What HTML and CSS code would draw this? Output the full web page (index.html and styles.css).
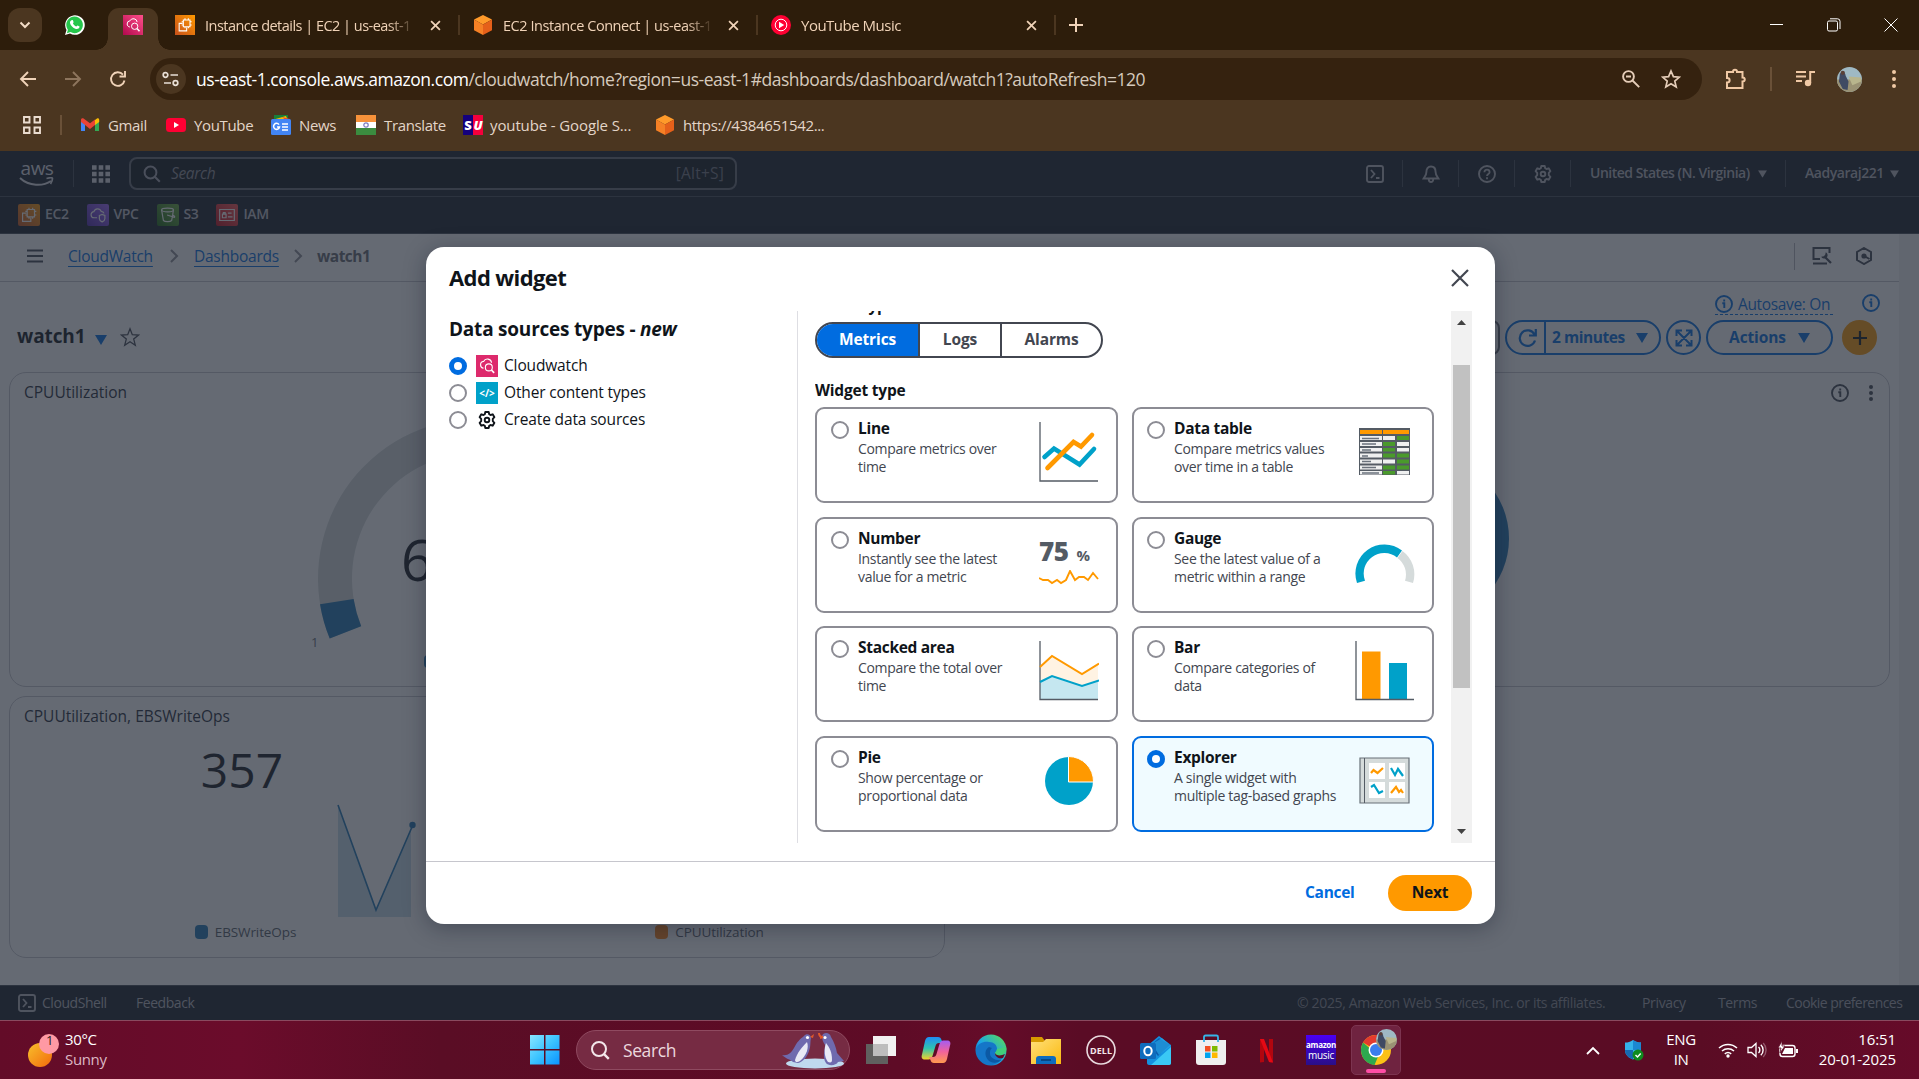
FILE: index.html
```html
<!DOCTYPE html>
<html lang="en">
<head>
<meta charset="utf-8">
<title>watch1 | CloudWatch | us-east-1</title>
<link rel="stylesheet" href="styles.css">
</head>
<body>
<svg class="sprite" aria-hidden="true">
  <defs>
    <linearGradient id="gWin" x1="0" y1="0" x2="1" y2="1"><stop offset="0" stop-color="#8ae6ff"/><stop offset=".5" stop-color="#3cc4ff"/><stop offset="1" stop-color="#0a92ff"/></linearGradient>
    <linearGradient id="gSun" x1="0" y1="0" x2="1" y2="1"><stop offset="0" stop-color="#f8c02c"/><stop offset="1" stop-color="#f26a0c"/></linearGradient>
    <linearGradient id="gEdge" x1="0" y1="1" x2="1" y2="0"><stop offset="0" stop-color="#0c59a4"/><stop offset=".45" stop-color="#1aa5e8"/><stop offset="1" stop-color="#5fe04a"/></linearGradient>
    <linearGradient id="gCopA" x1="0" y1="0" x2="0" y2="1"><stop offset="0" stop-color="#1f8df5"/><stop offset=".5" stop-color="#2fc3b0"/><stop offset="1" stop-color="#f4d22b"/></linearGradient>
    <linearGradient id="gCopB" x1="0" y1="0" x2="0" y2="1"><stop offset="0" stop-color="#a45cf2"/><stop offset=".5" stop-color="#f0629c"/><stop offset="1" stop-color="#ff9a4d"/></linearGradient>
    <linearGradient id="gFolder" x1="0" y1="0" x2="1" y2="1"><stop offset="0" stop-color="#ffe07a"/><stop offset="1" stop-color="#fbb90f"/></linearGradient>
  </defs>
  <symbol id="cw" viewBox="0 0 24 24"><path d="M17 8.500A4.600 4.600 0 0 0 8.300 7 3.700 3.700 0 0 0 5 10.800c0 2 1.300 3.300 3.200 3.600" fill="none" stroke="#fff" stroke-width="1.200"/><circle cx="14" cy="13.500" r="3.800" fill="none" stroke="#fff" stroke-width="1.200"/><path d="M16.800 16.300l3 3.200" stroke="#fff" stroke-width="1.800"/></symbol>
  <symbol id="ec2" viewBox="0 0 24 24"><path d="M10 6h8v8h-8zM12 4v2m4-2v2m-4 8v2m4-2v2M8 8h2m-2 4h2m8-4h2m-2 4h2M9 10H5v9h9v-4" fill="none" stroke="#fff" stroke-width="1.300"/></symbol>
  <symbol id="hexa" viewBox="0 0 20 20"><path d="M10 0l9 4.500L10 9.500 1 4.500z" fill="#ff9a2a"/><path d="M1 4.500l9 5V20l-9-4.700z" fill="#f58025"/><path d="M19 4.500l-9 5V20l9-4.700z" fill="#e5601a"/></symbol>
  <symbol id="x" viewBox="0 0 10 10"><path d="M1 1l8 8M9 1L1 9" stroke="currentColor" stroke-width="1.600" fill="none"/></symbol>
  <symbol id="info" viewBox="0 0 18 18"><circle cx="9" cy="9" r="8" fill="none" stroke="currentColor" stroke-width="1.900"/><path d="M7.300 8.200h2V13M9.200 4.600v1.800" stroke="currentColor" stroke-width="1.900" fill="none"/></symbol>
  <symbol id="caret" viewBox="0 0 12 10"><path d="M0 0h12L6 10z" fill="currentColor"/></symbol>
  <symbol id="gear" viewBox="0 0 18 18"><path d="M7.300 1h3.400l.5 2.200 1.300.8 2.200-.7 1.700 2.900-1.600 1.600v2.400l1.600 1.600-1.700 2.900-2.200-.7-1.300.8-.5 2.200H7.300l-.5-2.200-1.300-.8-2.200.7-1.700-2.900 1.600-1.600V7.800L1.600 6.200l1.700-2.900 2.200.7 1.300-.8z" fill="none" stroke="currentColor" stroke-width="1.900" stroke-linejoin="round"/><circle cx="9" cy="9" r="2.300" fill="none" stroke="currentColor" stroke-width="1.900"/></symbol>
  <symbol id="shell" viewBox="0 0 18 18"><rect x="1" y="1" width="16" height="16" rx="2" fill="none" stroke="currentColor" stroke-width="1.900"/><path d="M5 5l3.500 4L5 13M10 13h3.500" fill="none" stroke="currentColor" stroke-width="1.800"/></symbol>
  <symbol id="chev" viewBox="0 0 10 14"><path d="M2 1l6 6-6 6" fill="none" stroke="currentColor" stroke-width="2"/></symbol>
  <symbol id="face" viewBox="0 0 26 26"><circle cx="13" cy="13" r="13" fill="#9fb9c4"/><path d="M0 13h26a13 13 0 0 1-26 0z" fill="#9a9274"/><path d="M12 10l13 1v4l-9 4z" fill="#b8b58d"/><path d="M3 7c3-4 6-1 6 2l3 6-1 9-5-1-4-8z" fill="#3f4a63"/><circle cx="6" cy="6" r="2.200" fill="#5a4038"/></symbol>
</svg>

<header class="tabs">
  <div class="tab-search"><svg width="12" height="8"><path d="M1.500 1.500L6 6l4.500-4.500" fill="none" stroke="#f3dcc6" stroke-width="2"/></svg></div>
  <svg class="wa" width="20" height="20" viewBox="0 0 20 20"><path d="M0 20l1.500-5A9.800 9.800 0 1 1 5 18.500z" fill="#fff"/><path d="M1.900 18.200l1-3.400A8.300 8.300 0 1 1 5.500 17.100z" fill="#25c64b"/><path d="M6.500 5.300c1.200-.5 1.500 0 2 1.600.2.700-.7 1.100-.5 1.600.8 1.500 1.800 2.300 3.200 2.900.5.100.9-1 1.400-.8 1.500.7 2.100.8 1.900 1.500-.6 2-2.500 2.200-4.200 1.600C7.500 12.600 5.500 10.500 5 8c-.1-1.200.5-2.200 1.500-2.700z" fill="#fff"/></svg>
  <div class="tab-active"><span class="fav pink"><svg width="20" height="20"><use href="#cw"/></svg></span></div>
  <div class="tab t1"><span class="fav orange"><svg width="20" height="20"><use href="#ec2"/></svg></span><span class="tab-title">Instance details | EC2 | us-east-1</span><svg class="tx" width="11" height="11"><use href="#x"/></svg></div>
  <i class="tab-sep"></i>
  <div class="tab t2"><svg width="20" height="20"><use href="#hexa"/></svg><span class="tab-title">EC2 Instance Connect | us-east-1</span><svg class="tx" width="11" height="11"><use href="#x"/></svg></div>
  <i class="tab-sep"></i>
  <div class="tab t3"><svg width="20" height="20"><circle cx="10" cy="10" r="10" fill="#ff0033"/><circle cx="10" cy="10" r="5.800" fill="none" stroke="#fff"/><path d="M8 6.800l5.200 3.200L8 13.200z" fill="#fff"/></svg><span class="tab-title">YouTube Music</span><svg class="tx" width="11" height="11"><use href="#x"/></svg></div>
  <i class="tab-sep"></i>
  <svg class="newtab" width="14" height="14"><path d="M7 0v14M0 7h14" stroke="#f0d3b8" stroke-width="2"/></svg>
  <div class="win">
    <svg width="14" height="14"><path d="M0 6.500h13" stroke="#fff"/></svg>
    <svg width="14" height="14"><rect x=".5" y="3" width="10" height="10" rx="1.500" fill="none" stroke="#fff"/><path d="M3 .8h7.500a2.500 2.500 0 0 1 2.500 2.500V11" fill="none" stroke="#fff"/></svg>
    <svg width="14" height="14"><path d="M.5.5l13 13M13.500.5l-13 13" stroke="#fff"/></svg>
  </div>
</header>

<section class="chrome">
  <div class="bar">
    <svg class="nav-i" width="18" height="18"><path d="M17 9H2M9 2L2 9l7 7" fill="none" stroke="#f0d3b8" stroke-width="1.900"/></svg>
    <svg class="nav-i off" width="18" height="18"><path d="M1 9h15M9 2l7 7-7 7" fill="none" stroke="#f0d3b8" stroke-width="1.900"/></svg>
    <svg class="nav-i" width="18" height="18"><path d="M15.500 10.500A6.800 6.800 0 1 1 14 4.600M16 1v5.500h-5.500" fill="none" stroke="#f0d3b8" stroke-width="1.900"/></svg>
    <div class="omni">
      <span class="site"><svg width="18" height="16"><circle cx="3.500" cy="4" r="2.300" fill="none" stroke="#e9dfd6" stroke-width="1.700"/><path d="M8.500 4H16M2 12h7" stroke="#e9dfd6" stroke-width="1.700"/><circle cx="13.500" cy="12" r="2.300" fill="none" stroke="#e9dfd6" stroke-width="1.700"/></svg></span>
      <span class="url"><b>us-east-1.console.aws.amazon.com</b>/cloudwatch/home?region=us-east-1#dashboards/dashboard/watch1?autoRefresh=120</span>
      <svg width="18" height="18"><circle cx="6.500" cy="6.500" r="5.400" fill="none" stroke="#e5cdb8" stroke-width="1.900"/><path d="M10.500 10.500l6.700 6.700M4 6.500h5" stroke="#e5cdb8" stroke-width="1.900"/></svg>
      <svg class="star" width="20" height="20" viewBox="0 0 20 20"><path d="M10 2l2.400 5.600 6 .5-4.600 4 1.400 5.900L10 14.800 4.800 18l1.400-5.900-4.600-4 6-.5z" fill="none" stroke="#e5cdb8" stroke-width="1.700"/></svg>
    </div>
    <svg class="ext" width="22" height="22" viewBox="0 0 22 22"><path d="M3 4h5c0-3 4-3 4 0h5.500v5.500c3 0 3 4 0 4V20H2v-5.500c3.500 0 3.500-4.500 0-4.500V4z" fill="none" stroke="#f0c9a5" stroke-width="2"/></svg>
    <i class="bar-sep"></i>
    <svg class="mus" width="20" height="18"><path d="M1 2h10M1 6.500h10M1 11h6" stroke="#f0c9a5" stroke-width="2"/><circle cx="13" cy="13" r="3.200" fill="#f0c9a5"/><path d="M15.200 13V2H20" stroke="#f0c9a5" stroke-width="2" fill="none"/></svg>
    <svg class="ava" width="25" height="25"><use href="#face"/></svg>
    <svg class="kebab" width="4" height="18"><circle cx="2" cy="2" r="2" fill="#f0c9a5"/><circle cx="2" cy="9" r="2" fill="#f0c9a5"/><circle cx="2" cy="16" r="2" fill="#f0c9a5"/></svg>
  </div>
  <div class="marks">
    <svg class="apps" width="18" height="18"><path d="M1 1h5.500v5.500H1zM11.500 1H17v5.500h-5.500zM1 11.500h5.500V17H1zM11.500 11.500H17V17h-5.500z" fill="none" stroke="#eadccf" stroke-width="1.900"/></svg>
    <i></i>
    <a class="m1"><svg width="20" height="20"><path d="M1 4v12h4V9z" fill="#4285f4"/><path d="M19 4v12h-4V9z" fill="#34a853"/><path d="M15 5l2-1.500c1-.6 2.200 0 2.200 1.300V7L15 10z" fill="#fbbc04"/><path d="M1 5c0-1.700 1.500-2.300 2.600-1.400L10 8.300l5-3.800V10l-5 4-5-4-4-3z" fill="#ea4335"/></svg><span>Gmail</span></a>
    <a class="m2"><svg width="20" height="20"><rect y="3" width="20" height="14" rx="3.500" fill="#ff0033"/><path d="M8 7l5 3-5 3z" fill="#fff"/></svg><span>YouTube</span></a>
    <a class="m3"><svg width="20" height="20"><path d="M3 0h14v6H3z" fill="#188038"/><path d="M1 5l14-4 3 7z" fill="#fbbc04"/><path d="M11 2l8 2-1 4z" fill="#ea4335"/><rect y="4" width="20" height="16" rx="1.500" fill="#4285f4"/><path d="M8 9.600A3 3 0 1 0 8.500 12H6M11 9h6M11 12h6M11 15h6" stroke="#fff" stroke-width="1.500" fill="none"/></svg><span>News</span></a>
    <a class="m4"><svg width="20" height="20"><path d="M0 0h20v7H0z" fill="#f7923a"/><path d="M0 7h20v6H0z" fill="#fff"/><path d="M0 13h20v7H0z" fill="#3b8c3f"/><circle cx="10" cy="10" r="2.200" fill="none" stroke="#7b7bc0" stroke-width="1.200"/></svg><span>Translate</span></a>
    <a class="m5"><span class="su"><b>S</b><em>U</em></span><span>youtube - Google S...</span></a>
    <a class="m6"><svg width="20" height="20"><use href="#hexa"/></svg><span>https://4384651542...</span></a>
  </div>
</section>

<div class="page">
  <nav class="aws">
    <div class="logo"><span>aws</span><svg width="36" height="11"><path d="M1 1c9 8.500 23 8.500 31 3" fill="none" stroke="currentColor" stroke-width="2"/><path d="M27.500 1.500c4-1 6-1 6 0s-.7 3.500-2 5.500" fill="none" stroke="currentColor" stroke-width="1.700"/></svg></div>
    <i class="sep"></i>
    <svg class="grid9" width="18" height="18"><path d="M0 2.500h18M0 9h18M0 15.500h18" stroke="currentColor" stroke-width="4.600" stroke-dasharray="4.600 2.100"/></svg>
    <div class="search"><svg width="18" height="18"><circle cx="7.500" cy="7.500" r="5.900" fill="none" stroke="currentColor" stroke-width="2"/><path d="M11.800 11.800l5 5" stroke="currentColor" stroke-width="2"/></svg><em>Search</em><span>[Alt+S]</span></div>
    <div class="aws-right">
      <svg width="18" height="18"><use href="#shell"/></svg><i class="sep"></i>
      <svg width="18" height="18"><path d="M9 1.500c-3.200 0-4.600 2.500-4.600 5.500 0 3-1.400 4-2.800 6.500h14.800C15 11 13.600 10 13.600 7c0-3-1.400-5.500-4.600-5.500zM6.800 14.500a2.200 2.500 0 0 0 4.400 0" fill="none" stroke="currentColor" stroke-width="1.900"/></svg><i class="sep"></i>
      <svg width="18" height="18"><circle cx="9" cy="9" r="8" fill="none" stroke="currentColor" stroke-width="1.900"/><path d="M6.400 7.200c0-3.400 5.200-3.400 5.200 0 0 1.800-2.600 1.800-2.600 3.800M9 12.300v2" fill="none" stroke="currentColor" stroke-width="1.800"/></svg><i class="sep"></i>
      <svg width="18" height="18"><use href="#gear"/></svg><i class="sep"></i>
      <span class="region">United States (N. Virginia)</span><svg class="c1" width="9" height="8" viewBox="0 0 12 10"><use href="#caret"/></svg><i class="sep"></i>
      <span class="user">Aadyaraj221</span><svg class="c2" width="9" height="8" viewBox="0 0 12 10"><use href="#caret"/></svg>
    </div>
  </nav>
  <div class="favs">
    <a><span class="svc orange"><svg width="22" height="22"><use href="#ec2"/></svg></span><span class="lbl">EC2</span></a>
    <a><span class="svc purple"><svg width="22" height="22" viewBox="0 0 24 24"><path d="M11 15H8a3.300 3.300 0 0 1-.5-6.600A4.200 4.200 0 0 1 15.500 8c1.500 0 2.700 1 3 2.300M13.500 12.500l3-1.200 3 1.200V16c0 1.800-1.500 2.800-3 3.500-1.500-.7-3-1.700-3-3.500z" fill="none" stroke="#fff" stroke-width="1.300"/></svg></span><span class="lbl">VPC</span></a>
    <a><span class="svc green"><svg width="22" height="22" viewBox="0 0 24 24"><ellipse cx="11.500" cy="6.500" rx="6.500" ry="2" fill="none" stroke="#fff" stroke-width="1.300"/><path d="M5 6.500L7 18c1.500 1.500 7.500 1.500 9 0l2-11.500M11 12l8 2.500c1-1-1-2-2-2.500" fill="none" stroke="#fff" stroke-width="1.300"/></svg></span><span class="lbl">S3</span></a>
    <a><span class="svc red"><svg width="22" height="22" viewBox="0 0 24 24"><path d="M4 6h16v12H4zM7 11h4v4H7zM8 11V9.500h2V11M13 10h4m-4 4h5" fill="none" stroke="#fff" stroke-width="1.300"/></svg></span><span class="lbl">IAM</span></a>
  </div>

  <div class="main">
    <div class="content">
      <div class="crumbs">
        <svg class="burger" width="16" height="14"><path d="M0 1.500h16M0 7h16M0 12.500h16" stroke="currentColor" stroke-width="2"/></svg>
        <a class="cr1">CloudWatch</a><svg width="10" height="14"><use href="#chev"/></svg><a class="cr2">Dashboards</a><svg width="10" height="14"><use href="#chev"/></svg><b>watch1</b>
        <div class="crumb-right"><i></i>
          <svg width="20" height="20"><path d="M8 13H1.500V2h16v5M1 17.500h14" fill="none" stroke="currentColor" stroke-width="2"/><path d="M13 11l6 6" fill="none" stroke="currentColor" stroke-width="2.200"/><path d="M13.800 6.200a3.400 3.400 0 1 1-4.600 4.600l2.600-.6 1.400-1.400z" fill="currentColor"/></svg>
          <svg width="18" height="18"><path d="M9 1l7 4v8l-7 4-7-4V5z" fill="none" stroke="currentColor" stroke-width="2"/><circle cx="9" cy="9" r="2.600" fill="currentColor"/><path d="M10 9.500l4.500 2.500" stroke="currentColor" stroke-width="2"/></svg>
        </div>
      </div>
      <div class="dash-head">
        <h1>watch1</h1><svg class="hc" width="12" height="10"><use href="#caret"/></svg>
        <svg class="hs" width="20" height="20" viewBox="0 0 20 20"><path d="M10 1.800l2.300 5.900 6.200.4-4.800 4 1.600 6.100L10 14.800l-5.300 3.400 1.600-6.100-4.800-4 6.200-.4z" fill="none" stroke="currentColor" stroke-width="1.300"/></svg>
        <div class="tools">
          <div class="tool-top"><span class="auto"><svg width="18" height="18"><use href="#info"/></svg><span>Autosave: On</span></span><svg width="18" height="18"><use href="#info"/></svg></div>
          <div class="tool-row">
            <span class="range"></span>
            <span class="refresh"><span class="r1"><svg width="20" height="20"><path d="M17 12.500A7.800 7.800 0 1 1 16.500 6.500M17.800 1v6.500H11" fill="none" stroke="currentColor" stroke-width="2.200"/></svg></span><span class="r2"><b>2 minutes</b><svg width="12" height="10"><use href="#caret"/></svg></span></span>
            <span class="round"><svg width="18" height="18"><path d="M2 2l14 14M16 2L2 16M1.500 7V1.500H7M11 1.500h5.500V7M16.500 11v5.500H11M7 16.500H1.500V11" fill="none" stroke="currentColor" stroke-width="2"/></svg></span>
            <span class="actions"><b>Actions</b><svg width="12" height="10"><use href="#caret"/></svg></span>
            <span class="plus"><svg width="14" height="14"><path d="M7 0v14M0 7h14" stroke="#0f141a" stroke-width="2.200"/></svg></span>
          </div>
        </div>
      </div>
      <div class="widgets">
        <section class="w tall"><h2>CPUUtilization</h2>
          <svg class="gauge" width="400" height="260" viewBox="277 410 400 260"><path d="M328.700 637.600A160 160 0 1 1 625.300 637.600L593.800 624.800A126 126 0 1 0 360.200 624.800Z" fill="#d5dbdb"/><path d="M328.700 637.600A160 160 0 0 1 319 603.200L352.600 598A126 126 0 0 0 360.200 625.200Z" fill="#1f77b4"/><text x="400" y="580" class="gnum">62.5</text><text x="310" y="646" class="gmin">1</text><rect x="423" y="654" width="13" height="13" rx="4" fill="#1f77b4"/></svg>
        </section>
        <section class="w tall"><h2></h2><div class="w-tools"><svg width="18" height="18"><use href="#info"/></svg><svg width="4" height="16"><circle cx="2" cy="2" r="2" fill="currentColor"/><circle cx="2" cy="8" r="2" fill="currentColor"/><circle cx="2" cy="14" r="2" fill="currentColor"/></svg></div>
          <svg class="pie" width="165" height="165"><circle cx="82.500" cy="82.500" r="82.500" fill="#1f77b4"/></svg>
        </section>
        <section class="w short"><h2>CPUUtilization, EBSWriteOps</h2>
          <div class="nums">
            <div class="num n1"><div class="big">357</div><svg width="80" height="116"><path d="M2 4l38 105 35-82v89H2z" fill="#1f77b4" opacity=".25"/><path d="M2 4l38 105 36-83" fill="none" stroke="#1f77b4" stroke-width="1.600"/><circle cx="76.500" cy="24" r="3.200" fill="#1f77b4"/></svg><p><i class="bl"></i>EBSWriteOps</p></div>
            <div class="num n2"><div class="big"></div><p><i class="or"></i>CPUUtilization</p></div>
          </div>
        </section>
      </div>
    </div>
    <div class="gutter"></div>
  </div>
  <footer class="foot"><svg width="18" height="18"><use href="#shell"/></svg><a class="f1">CloudShell</a><a class="f2">Feedback</a><span class="f3">© 2025, Amazon Web Services, Inc. or its affiliates.</span><a class="f4">Privacy</a><a class="f5">Terms</a><a class="f6">Cookie preferences</a></footer>

  <div class="scrim">
    <div class="modal">
      <div class="m-head"><h2>Add widget</h2><svg width="18" height="18" viewBox="0 0 18 18"><path d="M1 1l16 16M17 1L1 17" stroke="#424650" stroke-width="2.200"/></svg></div>
      <div class="m-body">
        <div class="sources">
          <h3>Data sources types - <em>new</em></h3>
          <label><i class="radio on"></i><span class="ds rose"><svg width="22" height="22"><use href="#cw"/></svg></span><span>Cloudwatch</span></label>
          <label><i class="radio"></i><span class="ds teal">&lt;/&gt;</span><span>Other content types</span></label>
          <label><i class="radio"></i><span class="ds"><svg width="18" height="18"><use href="#gear"/></svg></span><span>Create data sources</span></label>
        </div>
        <div class="pane">
          <div class="types">
            <h4 class="clip">Data type</h4>
            <div class="seg"><b class="sel">Metrics</b><b>Logs</b><b>Alarms</b></div>
            <h4>Widget type</h4>
            <div class="tiles">
              <div class="tile"><i class="radio"></i><div><b>Line</b><p>Compare metrics over<br>time</p></div><svg width="60" height="60"><path d="M1 0v59h58" fill="none" stroke="#545b64" stroke-width="1.300"/><path d="M5.500 35L15 26.500l25.500 16L55 27" fill="none" stroke="#00a1c9" stroke-width="4.600" stroke-linecap="round"/><path d="M8.500 46L34.500 20l7.500 4.500L53 13" fill="none" stroke="#ff9900" stroke-width="4.600" stroke-linecap="round"/></svg></div>
              <div class="tile"><i class="radio"></i><div><b>Data table</b><p>Compare metrics values<br>over time in a table</p></div><svg width="60" height="60"><path d="M4 6h51v47H4z" fill="#545b64"/><path d="M5 8h22v4H5zM28 8h26v4H28z" fill="#ff9900"/><path d="M5 14h22v4H5zm0 6h22v4H5zm0 6h22v3.500H5zm0 5.500h22v4H5zm0 6h22v4H5zm0 6h22v4H5zm0 5.500h22v3.500H5zM28 14h12v4H28zm0 23.500h12v4H28zM42 20h12v4H42zm0 6h12v3.500H42zm0 23h12v3.500H42z" fill="#eff0f0"/><path d="M42 14h12v4H42zM28 20h12v4H28zm0 6h12v3.500H28zm0 5.500h12v4H28zm14 0h12v4H42zm0 6h12v4H42zm-14 6h12v4H28zm14 0h12v4H42zm-14 5.500h12v3.500H28z" fill="#4a9a2c"/><path d="M7 16.500h17M7 22h14M7 28h9M7 34h6M7 39.500h9M7 45.500h14M7 51h17" stroke="#6b727c" stroke-width="1.300"/></svg></div>
              <div class="tile"><i class="radio"></i><div><b>Number</b><p>Instantly see the latest<br>value for a metric</p></div><div class="pct"><span><b>75</b><small>%</small></span><svg width="60" height="16"><path d="M0 8l4 2h5l4 3 5-3 4 3 5-3 4-9 5 9 4-3h5l4 3 5-7 5 6" fill="none" stroke="#ff9900" stroke-width="1.900"/></svg></div></div>
              <div class="tile"><i class="radio"></i><div><b>Gauge</b><p>See the latest value of a<br>metric within a range</p></div><svg width="60" height="60"><path d="M2 51A29 29 0 0 1 47 18.500L42 25.500A20.500 20.500 0 0 0 10 48.700z" fill="#00a1c9"/><path d="M47.500 18.900A29 29 0 0 1 58 51L50 48.700A20.500 20.500 0 0 0 42.500 25.900z" fill="#d5dbdb"/></svg></div>
              <div class="tile"><i class="radio"></i><div><b>Stacked area</b><p>Compare the total over<br>time</p></div><svg width="60" height="60"><path d="M1 27l12-12 30 18 16-11v36H1z" fill="#fff3e3"/><path d="M1 41l12-6 30 10 16-6v19H1z" fill="#c5e7f0"/><path d="M1 0v58.500h58" fill="none" stroke="#545b64" stroke-width="1.300"/><path d="M1 26l12-11 30 18 17-10.500" fill="none" stroke="#ff9900" stroke-width="2"/><path d="M1 41l12-6 30 10 17-5.500" fill="none" stroke="#00a1c9" stroke-width="2"/></svg></div>
              <div class="tile"><i class="radio"></i><div><b>Bar</b><p>Compare categories of<br>data</p></div><svg width="60" height="60"><path d="M7 10.500h18.500V58H7z" fill="#ff9900"/><path d="M34 22h18v36H34z" fill="#00a1c9"/><path d="M1 0v58.500h58" fill="none" stroke="#545b64" stroke-width="1.300"/></svg></div>
              <div class="tile"><i class="radio"></i><div><b>Pie</b><p>Show percentage or<br>proportional data</p></div><svg width="60" height="60"><circle cx="30" cy="30" r="24" fill="#00a1c9"/><path d="M29.500 5.500V31H54.500A25 25 0 0 0 29.500 5.500z" fill="#ff9900" stroke="#fff"/></svg></div>
              <div class="tile chosen"><i class="radio on"></i><div><b>Explorer</b><p>A single widget with<br>multiple tag-based graphs</p></div><svg width="60" height="60"><path d="M5 7h49v45H5z" fill="#d5dbdb" stroke="#687078" stroke-width="1.200"/><path d="M9.500 7v45" stroke="#545b64"/><path d="M14 12h16v16H14zM34 12h16v16H34zM14 31h16v16H14zM34 31h16v16H34z" fill="#fff"/><path d="M16 22l2.500-3 4 3 5.500-5" fill="none" stroke="#ff9900" stroke-width="2.200"/><path d="M36 17l4 7 3-6 5 7" fill="none" stroke="#00a1c9" stroke-width="2.200"/><path d="M16 36l3-2 5 8 4-2" fill="none" stroke="#00a1c9" stroke-width="2.200"/><path d="M36 42l5-6 3 5 2-2 2 3" fill="none" stroke="#ff9900" stroke-width="2.200"/></svg></div>
            </div>
          </div>
          <div class="scroll"><svg width="9" height="5"><path d="M0 5h9L4.500 0z" fill="#424242"/></svg><i></i><svg width="9" height="5"><path d="M0 0h9L4.500 5z" fill="#424242"/></svg></div>
        </div>
      </div>
      <div class="m-foot"><b class="cancel">Cancel</b><b class="next">Next</b></div>
    </div>
  </div>
</div>

<div class="task">
  <div class="weather"><svg width="40" height="40"><circle cx="16" cy="25" r="12" fill="url(#gSun)"/><circle cx="25" cy="14" r="10" fill="#ff99a4"/></svg><em>1</em><div><span>30°C</span><span class="dim">Sunny</span></div></div>
  <svg class="start" width="30" height="30"><path d="M0 0h14v14H0zM15.500 0h14v14h-14zM0 15.500h14v14H0zM15.500 15.500h14v14h-14z" fill="url(#gWin)"/></svg>
  <div class="tsearch"><svg width="19" height="19"><circle cx="8" cy="8" r="7" fill="none" stroke="#f3e6ea" stroke-width="2"/><path d="M12.800 12.800l5 5" stroke="#f3e6ea" stroke-width="2.400"/></svg><span>Search</span>
    <svg class="peng" width="62" height="38" viewBox="0 0 62 38"><ellipse cx="33" cy="32.500" rx="29" ry="5" fill="#bfd9ee"/><path d="M22 5c2-3 7-2 7 2-1 4 0 8-2 13-2 6-6 11-11 12l-5-1c-3-3-7-3-11-7 6 1 9-2 12-7 3-6 6-9 10-12z" fill="#6f6aae"/><path d="M25 11c2 5 0 13-7 19-3 2-5 1-5-1 2-7 7-13 12-18z" fill="#e8e9f5"/><circle cx="25.500" cy="6.500" r="1.600" fill="#fff"/><path d="M28 6l4-3-1 4z" fill="#e0582a"/><path d="M40 5c1-4 8-4 9 1 3 5 5 10 6 16l7 8-6 1c-2 4-10 4-12 1-4-6-1-13-1-18-2-3-3-6-3-9z" fill="#6f6aae"/><path d="M44 12c-2 6-2 14 2 19 3 1 4 0 4-2 0-7-2-12-6-17z" fill="#e8e9f5"/><circle cx="43" cy="6.500" r="1.600" fill="#fff"/><path d="M37 2c0 3 2 4 4 4M38 7l3-1" fill="none" stroke="#e0582a" stroke-width="2"/></svg></div>
  <div class="icons">
    <svg viewBox="0 0 32 32"><path d="M1 10h22v20H1z" fill="#60605f"/><path d="M8 2h23v20H8z" fill="#f1f1f1"/><path d="M8 10h15v12H8z" fill="#bdbdbd"/></svg>
    <svg viewBox="0 0 32 32"><path d="M9 3h9c2 0 3 1 3.500 3L23 9h-4c-2 0-3 1-3.500 3l-3 10c-.8 2.500-2 3.500-4 3.500H5c-3 0-4-2-3-5L5 7c.7-2.500 2-4 4-4z" fill="url(#gCopA)"/><path d="M23 29h-9c-2 0-3-1-3.500-3L9 23h4c2 0 3-1 3.500-3l3-10c.8-2.500 2-3.500 4-3.500H27c3 0 4 2 3 5L27 25c-.7 2.500-2 4-4 4z" fill="url(#gCopB)"/></svg>
    <svg viewBox="0 0 32 32"><circle cx="16" cy="16" r="15.500" fill="url(#gEdge)"/><path d="M1 15c2-6 8-8 13-7 5 0 8 3 8 7 0 2-2 3-2 4 0 3 5 4 9 2-3 7-9 10.500-15 10A15.500 15.500 0 0 1 1 15z" fill="#1576c8"/><path d="M14 13c-4 2-5 8-1 13 4 4 10 3 14 0-6 1-13-2-12-8 0-2 1-3 2-4z" fill="#0c59a4"/><path d="M22 15c0 2-2 3-2 4 0 3 5 4 9 1 2-2 3-5 2-7z" fill="#41cf7a"/><path d="M20 19c1 3 6 3 10 1l-2 4c-4 1-8-1-8-5z" fill="#5c0c27"/></svg>
    <svg viewBox="0 0 32 32"><path d="M1 3h11l3 4h16v23H1z" fill="#d79a00"/><path d="M1 8h12l3-3h15v25H1z" fill="url(#gFolder)"/><path d="M6 30v-5c0-2 1-3 3-3h14c2 0 3 1 3 3v5z" fill="#0f6cbd"/><path d="M11 26h10" stroke="#063b73" stroke-width="1.500"/></svg>
    <svg viewBox="0 0 32 32"><circle cx="16" cy="16" r="14" fill="none" stroke="#e9dade" stroke-width="1.600"/><text x="5" y="19.500" class="dell" textLength="22">DELL</text></svg>
    <svg viewBox="0 0 32 32"><path d="M7 12L19 2l12 9v18c0 1-1 2-2 2H9c-1 0-2-1-2-2z" fill="#1490df"/><path d="M10 12L19 4l11 7-12 11z" fill="#0b5cad"/><path d="M31 13v16c0 1-1 2-2 2H11z" fill="#3ac8f5"/><path d="M12 10L22 4l9 8-12 9z" fill="#28a8ea" opacity=".65"/><rect x="0" y="9" width="16" height="16" rx="1.500" fill="#0f6cbd"/><ellipse cx="8" cy="17" rx="3.700" ry="4.200" fill="none" stroke="#fff" stroke-width="2"/></svg>
    <svg viewBox="0 0 32 32"><path d="M1 6h30v22c0 2-1 3-3 3H4c-2 0-3-1-3-3z" fill="#efefef"/><path d="M9 8V3c0-1 .5-1.500 1.500-1.500h11c1 0 1.500.5 1.500 1.500v5" fill="none" stroke="#36b4e8" stroke-width="1.800"/><path d="M10 12h5.500v5.500H10z" fill="#f25022"/><path d="M17 12h5.500v5.500H17z" fill="#7fba00"/><path d="M10 18.500h5.500V24H10z" fill="#00a4ef"/><path d="M17 18.500h5.500V24H17z" fill="#ffb900"/></svg>
    <svg viewBox="0 0 32 32"><path d="M10 5h4v23l-4 .5zM19 5h4v23.500L19 28z" fill="#b1060f"/><path d="M10 5h4l9 23.500-4-.5z" fill="#e50914"/></svg>
    <span class="am"><b>amazon</b><b class="mu">music</b></span>
    <span class="chr"><svg width="32" height="32" viewBox="0 0 32 32"><circle cx="16" cy="16" r="15" fill="#fbc116"/><path d="M16 16L3 8.500A15 15 0 0 1 29 8.500z" fill="#e33b2e"/><path d="M3 8.500A15 15 0 0 0 14.500 31L20 18l-7-1z" fill="#2da94f"/><circle cx="16" cy="16" r="7.500" fill="#fff"/><circle cx="16" cy="16" r="6" fill="#3b7ded"/></svg><svg class="cav" width="21" height="21" viewBox="0 0 26 26"><use href="#face"/></svg></span>
  </div>
  <div class="tray">
    <svg class="up" width="14" height="9"><path d="M1 8l6-6 6 6" fill="none" stroke="#fff" stroke-width="1.800"/></svg>
    <svg class="shield" width="20" height="22"><path d="M9 1c3 2 5 2.500 8 2.500V11c0 5-4 8-8 9.500C5 19 1 16 1 11V3.500C4 3.500 6 3 9 1z" fill="#34b3ea"/><path d="M9 1c3 2 5 2.500 8 2.500V11H9z" fill="#1b88d2"/><path d="M1 11h8v9.500C5 19 1 16 1 11z" fill="#1668b0"/><circle cx="14" cy="16" r="5.500" fill="#0f8a1d"/><path d="M11.500 16l2 2 3.200-3.500" fill="none" stroke="#fff" stroke-width="1.400"/></svg>
    <div class="lang"><span>ENG</span><span>IN</span></div>
    <svg class="wifi" width="20" height="16"><path d="M1 6a13 13 0 0 1 18 0M4 9a9 9 0 0 1 12 0M6.800 11.800a5 5 0 0 1 6.400 0" fill="none" stroke="#fff" stroke-width="1.500"/><circle cx="10" cy="14" r="1.700" fill="#fff"/></svg>
    <svg class="snd" width="20" height="18"><path d="M1 6.500h3.500L9 2.500v13l-4.500-4H1z" fill="none" stroke="#fff" stroke-width="1.300"/><path d="M11.500 6a4 4 0 0 1 0 6M13.800 3.800a7 7 0 0 1 0 10.400" fill="none" stroke="#fff" stroke-width="1.400"/><path d="M16.200 2a10 10 0 0 1 0 14" fill="none" stroke="#94596c" stroke-width="1.400"/></svg>
    <svg class="bat" width="21" height="18"><rect x="2" y="4.500" width="15" height="11" rx="2.500" fill="none" stroke="#fff" stroke-width="1.400"/><path d="M7 7h8v6H4zM18 8h2v4h-2z" fill="#fff"/><path d="M4 0L0 7h3L2 12l5-7H4z" fill="#fff" stroke="#5f0c27" stroke-width=".8"/></svg>
    <div class="clock"><span>16:51</span><span>20-01-2025</span></div>
  </div>
</div>
</body>
</html>
```
FILE: styles.css
```css
* { box-sizing: border-box; }
html, body { margin: 0; height: 100%; overflow: hidden; }
body { width: 1919px; height: 1079px; display: flex; flex-direction: column; font-family: "Open Sans", "Noto Sans", sans-serif; background: #4b3620; color: #0f141a; white-space: nowrap; }
svg { display: block; flex: none; }
i { display: block; flex: none; }
h1, h2, h3, h4, p { margin: 0; }
.sprite { position: absolute; width: 0; height: 0; }
.pink { background: linear-gradient(45deg, #b0084d, #ff4f8b); }
.orange { background: linear-gradient(45deg, #c8511b, #ff9900); }
.purple { background: linear-gradient(45deg, #4d27aa, #a166ff); }
.green { background: linear-gradient(45deg, #1b660f, #6cae3e); }
.red { background: linear-gradient(45deg, #bd0816, #ff5252); }

/* tab strip */
.tabs { height: 50px; flex: none; display: flex; align-items: center; background: #2d1d0b; color: #f0d3b8; font-size: 15px; padding-left: 8px; }
.tab-search { width: 34px; height: 34px; border-radius: 12px; background: #4b3620; display: flex; align-items: center; justify-content: center; }
.wa { margin: 0 23px 0 23px; }
.tab-active { width: 50px; height: 42px; align-self: flex-end; border-radius: 11px 11px 0 0; background: #4b3620; display: flex; align-items: center; justify-content: center; padding-bottom: 8px; position: relative; }
.tab-active::before, .tab-active::after { content: ""; position: absolute; bottom: 0; width: 12px; height: 12px; }
.tab-active::before { left: -12px; background: radial-gradient(circle at 0 0, #2d1d0b 11.5px, #4b3620 12px); }
.tab-active::after { right: -12px; background: radial-gradient(circle at 100% 0, #2d1d0b 11.5px, #4b3620 12px); }
.fav { width: 20px; height: 20px; flex: none; }
.tab { display: flex; align-items: center; gap: 10px; }
.tab-title { flex: 1; overflow: hidden; letter-spacing: -0.5px; -webkit-mask-image: linear-gradient(90deg, #000 calc(100% - 28px), transparent); mask-image: linear-gradient(90deg, #000 calc(100% - 28px), transparent); }
.t1 .tab-title { font-size: 14.5px; letter-spacing: -0.52px; }
.t2 .tab-title { font-size: 14.5px; letter-spacing: -0.45px; }
.tab .tx { margin-left: 4px; }
.t1 { width: 266px; margin-left: 17px; margin-right: 17px; }
.t2 { width: 266px; margin-left: 13px; margin-right: 17px; }
.t3 { width: 266px; margin-left: 13px; margin-right: 17px; }
.tab-sep { width: 2px; height: 20px; background: #4b3620; }
.newtab { margin-left: 13px; }
.win { margin-left: auto; display: flex; gap: 43px; margin-right: 21px; }

/* toolbar */
.chrome { height: 101px; flex: none; background: #4b3620; }
.bar { height: 58px; display: flex; align-items: center; padding-left: 19px; }
.nav-i { margin-right: 27px; }
.nav-i + .nav-i + .nav-i { margin-right: 24px; }
.off { opacity: .4; }
.omni { width: 1552px; height: 42px; border-radius: 21px; background: #35220f; display: flex; align-items: center; padding: 0 21px 0 6px; margin-left: -1px; }
.site { width: 30px; height: 30px; border-radius: 50%; background: #4b3620; display: flex; align-items: center; justify-content: center; }
.url { flex: 1; margin-left: 10px; font-size: 17.5px; letter-spacing: -0.47px; color: #d6cabd; }
.url b { font-weight: 400; color: #fff; }
.star { margin-left: 21px; }
.ext { margin-left: 23px; }
.bar-sep { width: 2px; height: 24px; background: #6a5138; margin: 0 23px 0 23px; }
.ava { margin: 0 30px 0 22px; }
.marks { height: 34px; display: flex; align-items: center; padding-left: 23px; font-size: 15px; color: #e3d5c8; }
.marks i { width: 2px; height: 20px; background: #6a5138; margin: 0 18px 0 19px; }
.marks a { display: flex; align-items: center; gap: 8px; letter-spacing: -0.35px; }
.m1 { width: 86px; } .m2 { width: 105px; } .m3 { width: 85px; } .m4 { width: 107px; } .m5 { width: 192px; }
.marks .m5 { gap: 7px; letter-spacing: -0.12px; }
.su { display: flex; width: 20px; height: 20px; background: linear-gradient(90deg, #14007d 50%, #f5003c 50%); color: #fff; font-size: 13px; line-height: 20px; }
.su b, .su em { width: 10px; text-align: center; font-weight: 800; }

/* aws console */
.page { height: 869px; flex: none; position: relative; background: #fff; display: flex; flex-direction: column; }
.aws { height: 46px; flex: none; display: flex; align-items: center; background: #161d26; border-bottom: 1px solid #424650; color: #dedee3; padding-left: 19px; }
.logo { width: 36px; height: 30px; }
.logo span { display: block; font-size: 19px; line-height: 19px; height: 18px; text-align: center; letter-spacing: -0.5px; }
.sep { width: 1px; height: 27px; background: #424650; }
.logo + .sep { margin: 0 18px 0 18px; }
.search { width: 608px; height: 33px; margin-left: 19px; border: 2px solid #656871; border-radius: 8px; background: #0f141a; display: flex; align-items: center; padding: 0 11px 0 12px; font-size: 15.5px; color: #a4a4ad; }
.search em { margin-left: 10px; padding-bottom: 1px; letter-spacing: -0.35px; color: #8c8c94; }
.search span { margin-left: auto; padding-bottom: 1px; color: #72747e; letter-spacing: .2px; }
.aws-right { margin-left: auto; display: flex; align-items: center; padding-right: 20px; font-size: 14px; color: #b4b4bb; }
.aws-right > svg + .sep { margin: 0 19px 0 18px; }
.region { width: 161px; letter-spacing: -0.5px; font-weight: 600; padding-bottom: 2px; }
.user { width: 77px; letter-spacing: -0.45px; font-weight: 600; padding-bottom: 2px; }
.c1 { margin-left: 7px; } .c2 { margin-left: 8px; }
.favs { height: 37px; flex: none; display: flex; align-items: center; gap: 18px; padding: 0 0 1px 18px; background: #161d26; border-bottom: 1px solid #424650; color: #c0c0c8; font-size: 14px; font-weight: 600; letter-spacing: -0.4px; }
.favs a { display: flex; align-items: center; gap: 5px; }
.lbl { padding-bottom: 2px; }
.svc { width: 22px; height: 22px; border-radius: 2px; }
.main { flex: 1; display: flex; min-height: 0; }
.content { width: 1899px; }
.gutter { flex: 1; background: #f1f1f1; }
.crumbs { height: 48px; display: flex; align-items: center; border-bottom: 1px solid #c6c6cd; padding: 0 26px 3px 27px; font-size: 15.5px; color: #656871; letter-spacing: -0.25px; }
.burger { color: #424650; margin-right: 25px; }
.crumbs a { color: #006ce0; text-decoration: underline; text-underline-offset: 4px; }
.cr1 { width: 86px; } .cr2 { width: 84px; }
.crumbs > svg:not(.burger) { margin: 0 15px 0 15px; color: #8c8c94; }
.crumbs b { font-weight: 700; letter-spacing: -0.5px; margin-left: -1px; }
.crumb-right { margin-left: auto; display: flex; align-items: center; color: #424650; }
.crumb-right i { width: 1px; height: 27px; background: #b6b6bd; margin-right: 17px; }
.crumb-right svg + svg { margin-left: 23px; }
.dash-head { height: 90px; display: flex; padding-left: 17px; }
.dash-head h1 { width: 78px; font-size: 19px; line-height: 24px; margin-top: 42px; letter-spacing: -0.1px; }
.hc { color: #006ce0; margin-top: 53px; }
.hs { color: #424650; margin: 45px 0 0 13px; }
.tools { margin-left: auto; color: #006ce0; }
.tool-top { display: flex; justify-content: flex-end; padding: 12px 19px 0 0; height: 38px; align-items: flex-start; gap: 29px; }
.auto { display: flex; gap: 5px; align-items: center; width: 118px; height: 21px; font-size: 15.5px; letter-spacing: -0.35px; border-bottom: 1px dashed #006ce0; }
.auto svg { margin-bottom: 1px; }
.auto span { padding-bottom: 1px; }
.tool-row { display: flex; padding-right: 22px; }
.tool-row > span { height: 35px; border: 2px solid #006ce0; border-radius: 18px; display: flex; align-items: center; justify-content: center; font-size: 15.5px; }
.tool-row b { padding-bottom: 1px; }
.tool-row .range { width: 120px; border-color: #656871; border-radius: 8px; margin-right: 5px; }
.tool-row .refresh { width: 156px; margin-right: 5px; }
.r1 { width: 39px; height: 31px; border-right: 2px solid; display: flex; align-items: center; justify-content: center; padding-left: 4px; }
.r2 { flex: 1; display: flex; align-items: center; justify-content: space-between; padding: 0 11px 0 6px; letter-spacing: -0.45px; }
.tool-row .round { width: 35px; margin-right: 5px; }
.tool-row .actions { width: 127px; gap: 12px; margin-right: 9px; letter-spacing: -0.1px; }
.tool-row .plus { width: 35px; background: #ff9900; border: 0; }
.widgets { display: grid; grid-template-columns: 936px 935px; grid-template-rows: 315px 262px; gap: 9px 10px; padding-left: 9px; }
.w { border: 1px solid #c6c6cd; border-radius: 17px; padding: 8px 14px; position: relative; overflow: hidden; }
.w h2 { font-size: 15.5px; font-weight: 400; height: 22px; line-height: 22px; color: #232b37; letter-spacing: 0; }
.gauge { margin: 8px 0 0 254px; }
.gnum { font-size: 56px; fill: #16191f; letter-spacing: -1px; }
.gmin { font-size: 13px; fill: #687078; }
.w-tools { position: absolute; right: 16px; top: 11px; display: flex; align-items: center; gap: 20px; color: #424650; }
.pie { margin: 53px 0 0 374px; }
.nums { display: grid; grid-template-columns: 1fr 1fr; text-align: center; }
.num { display: flex; flex-direction: column; align-items: center; }
.big { height: 74px; line-height: 86px; font-size: 48px; color: #16191f; letter-spacing: 0; margin-left: -17px; }
.num svg { margin-left: 250px; }
.num p { height: 30px; display: flex; align-items: center; gap: 7px; font-size: 13.5px; color: #545b64; letter-spacing: -0.1px; }
.n1 p { margin-left: -10px; }
.n2 p { margin-left: 12px; margin-top: 116px; }
.num p i { width: 13px; height: 14px; border-radius: 4px; }
.bl { background: #1f77b4; } .or { background: #ff7f0e; }
.foot { height: 35px; flex: none; display: flex; align-items: center; background: #161d26; border-top: 1px solid #424650; color: #b4b4bb; padding-left: 18px; font-size: 14px; letter-spacing: -0.45px; }
.foot a, .foot span { padding-bottom: 2px; }
.f1 { width: 94px; margin-left: 6px; }
.foot .f3 { margin-left: auto; width: 345px; color: #8c8c94; letter-spacing: -0.35px; }
.f4 { width: 76px; } .f5 { width: 68px; } .f6 { width: 133px; }
.f4, .f5, .f6 { color: #a4a4ad; letter-spacing: -0.35px; }
.f6 { letter-spacing: -0.55px; }

/* dialog */
.scrim { position: absolute; inset: 0; background: rgba(35, 43, 55, .7); }
.modal { position: absolute; left: 426px; top: 96px; width: 1069px; height: 677px; border-radius: 18px; background: #fff; box-shadow: 0 4px 22px rgba(15, 20, 36, .35); display: flex; flex-direction: column; }
.m-head { height: 64px; flex: none; display: flex; justify-content: space-between; align-items: center; padding: 0 26px 3px 23px; }
.m-head h2 { font-size: 22px; letter-spacing: -0.6px; padding-bottom: 2px; }
.m-body { height: 550px; flex: none; display: flex; padding-left: 23px; }
.sources { width: 349px; height: 532px; border-right: 1px solid #dedee3; font-size: 15.5px; }
.sources h3 { font-size: 19px; line-height: 36px; height: 41px; letter-spacing: -0.22px; }
.sources label { display: flex; align-items: center; height: 27px; letter-spacing: -0.15px; }
.radio { width: 18px; height: 18px; border: 2px solid #8c8c94; border-radius: 50%; background: #fff; }
.radio.on { border: 5.5px solid #006ce0; }
.ds { width: 22px; height: 22px; margin: 0 6px 0 9px; display: flex; align-items: center; justify-content: center; }
.ds + span { padding-bottom: 1px; }
.rose { background: #dd2a6c; }
.teal { background: #00a1c9; color: #fff; font-size: 10px; font-weight: 700; letter-spacing: 0; }
.pane { height: 532px; display: flex; margin-left: 17px; overflow: hidden; }
.types { width: 620px; margin-right: 16px; }
.types h4 { font-size: 15.5px; line-height: 22px; letter-spacing: -0.2px; margin: 21px 0 6px; }
.types .clip { margin: -17px 0 6px; padding-left: 7px; }
.seg { display: flex; width: 288px; height: 36px; border: 2px solid #424650; border-radius: 18px; overflow: hidden; color: #424650; font-size: 15.5px; line-height: 31px; text-align: center; letter-spacing: -0.1px; }
.seg b { width: 82px; border-right: 2px solid #424650; }
.seg b:last-child { flex: 1; border: 0; }
.seg .sel { width: 103px; background: #006ce0; color: #fff; }
.tiles { display: grid; grid-template-columns: 303px 302px; grid-auto-rows: 96px; gap: 13.6px 14px; }
.tile { border: 2px solid #8c8c94; border-radius: 9px; display: flex; padding: 12px 18px 0 14px; }
.tile:nth-child(even) { padding-left: 13px; }
.tile > div:not(.pct) { margin-left: 9px; flex: 1; margin-top: -4px; }
.tile div > b { display: block; font-size: 15.5px; line-height: 22px; letter-spacing: -0.3px; margin-bottom: 1px; }
.tile p { font-size: 14px; line-height: 18px; color: #424650; letter-spacing: -0.32px; }
.tile > svg { margin-top: 1px; margin-right: -1px; }
.chosen { border-color: #006ce0; background: #f0fbff; }
.pct { width: 60px; margin: 1px -1px 0 0; color: #545b64; }
.pct span { display: flex; align-items: baseline; gap: 8px; height: 38px; }
.tile .pct b { font-size: 26px; line-height: 38px; font-weight: 800; letter-spacing: -0.5px; margin: 0; }
.pct small { font-size: 15px; font-weight: 700; }
.scroll { width: 21px; height: 532px; background: #f1f1f1; display: flex; flex-direction: column; align-items: center; justify-content: space-between; padding: 9px 0; }
.scroll i { width: 17px; height: 323px; background: #c1c1c1; margin: 0 0 102px; }
.m-foot { flex: 1; border-top: 1px solid #c6c6cd; display: flex; align-items: center; justify-content: flex-end; padding-right: 23px; font-size: 15.5px; letter-spacing: -0.2px; }
.cancel { color: #006ce0; width: 83px; padding-bottom: 2px; letter-spacing: -0.3px; }
.next { width: 84px; height: 36px; line-height: 35px; text-align: center; border-radius: 18px; background: #ff9900; }

/* taskbar */
.task { height: 59px; flex: none; display: flex; align-items: center; border-top: 1px solid #8a4a5f; background: linear-gradient(90deg, #630c28 0, #6b0c2b 240px, #5a0d25 440px, #5e0b26 900px, #650c29 990px, #5a0c25 1080px, #5a0c24 1700px, #660b29 1919px); color: #fff; font-size: 15px; }
.weather { display: flex; align-items: center; width: 530px; padding-left: 24px; position: relative; letter-spacing: -0.35px; line-height: 20px; }
.weather em { position: absolute; left: 46px; top: 1px; font-size: 13px; font-style: normal; color: #222; }
.weather div { margin-left: 1px; display: flex; flex-direction: column; padding-bottom: 3px; }
.dim { color: #dcb9c4; }
.tsearch { width: 274px; height: 40px; margin-left: 16px; border: 1px solid #8f4a60; border-radius: 20px; background: #762b43; display: flex; align-items: center; padding-left: 14px; font-size: 17.5px; color: #ecd8de; }
.tsearch span { margin-left: 13px; letter-spacing: -0.4px; }
.peng { margin-left: auto; margin-right: 5px; }
.icons { display: flex; align-items: center; gap: 23px; margin-left: 15px; }
.icons > svg { width: 32px; height: 32px; }
.dell { font-size: 9px; font-weight: 700; fill: #f3e6ea; }
.am { width: 30px; height: 30px; margin: 0 1px; background: linear-gradient(#4a00f5, #2a0f86); font-size: 8px; line-height: 10px; text-align: center; padding-top: 5px; letter-spacing: -0.3px; }
.am b { display: block; }
.am .mu { font-size: 10px; font-weight: 400; }
.chr { width: 50px; height: 50px; margin-left: -9px; border-radius: 5px; background: #6f2340; border: 1px solid #7c3450; display: flex; align-items: center; justify-content: center; position: relative; }
.chr::after { content: ""; position: absolute; left: 14px; bottom: 1px; width: 20px; height: 4px; border-radius: 2px; background: #ff4da6; }
.cav { position: absolute; right: 3px; top: 3px; }
.tray { margin-left: auto; display: flex; align-items: center; line-height: 20px; padding-right: 23px; letter-spacing: -0.4px; }
.tray div { display: flex; flex-direction: column; padding-bottom: 3px; }
.shield { margin: 0 21px 0 24px; }
.lang { width: 32px; text-align: center; }
.wifi { margin-left: 21px; } .snd { margin-left: 9px; } .bat { margin-left: 11px; }
.clock { width: 97px; text-align: right; letter-spacing: -0.1px; }
```
